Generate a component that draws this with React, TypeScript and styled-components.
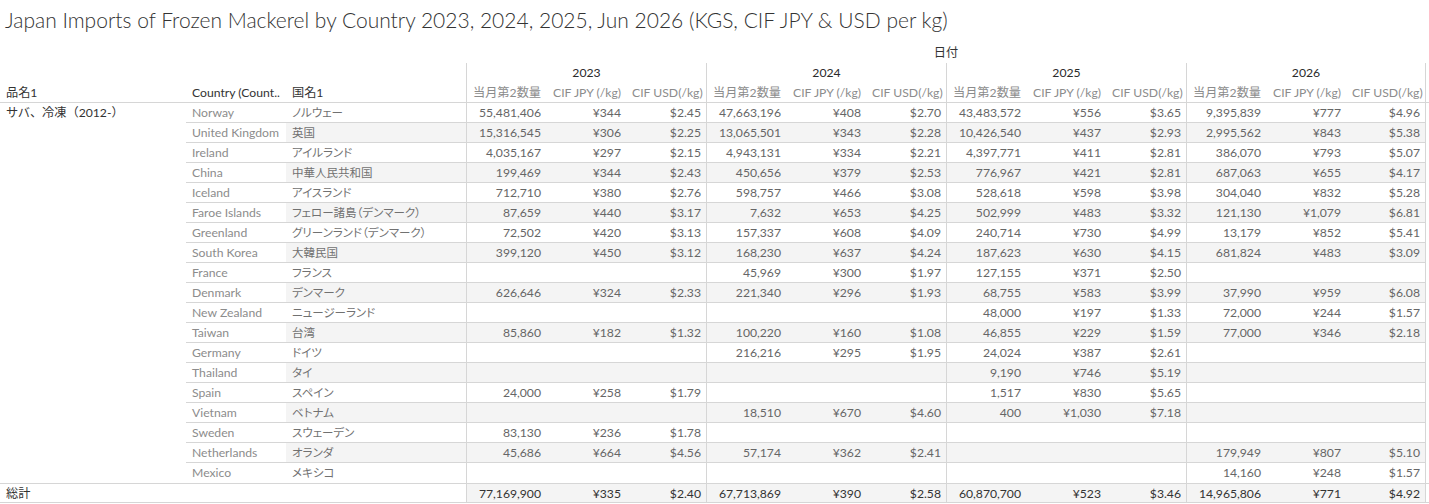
import React, { ReactElement } from 'react';
import styled, { createGlobalStyle } from 'styled-components';

const GlobalStyle = createGlobalStyle`
  body {
    background: #ffffff;
    margin: 0;
  }
`;

const GRID = '186px 100px 180px repeat(12, 80px)';
const LINE = '#d6d6d6';
const BAND = '#f4f4f4';

type Triple = [string, string, string] | null;

interface DataRow {
  country: string;
  jp: string;
  years: Triple[];
}

const years = ['2023', '2024', '2025', '2026'];
const measures = ['当月第2数量', 'CIF JPY (/kg)', 'CIF USD(/kg)'];

const rows: DataRow[] = [
  { country: 'Norway', jp: 'ノルウェー', years: [['55,481,406', '¥344', '$2.45'], ['47,663,196', '¥408', '$2.70'], ['43,483,572', '¥556', '$3.65'], ['9,395,839', '¥777', '$4.96']] },
  { country: 'United Kingdom', jp: '英国', years: [['15,316,545', '¥306', '$2.25'], ['13,065,501', '¥343', '$2.28'], ['10,426,540', '¥437', '$2.93'], ['2,995,562', '¥843', '$5.38']] },
  { country: 'Ireland', jp: 'アイルランド', years: [['4,035,167', '¥297', '$2.15'], ['4,943,131', '¥334', '$2.21'], ['4,397,771', '¥411', '$2.81'], ['386,070', '¥793', '$5.07']] },
  { country: 'China', jp: '中華人民共和国', years: [['199,469', '¥344', '$2.43'], ['450,656', '¥379', '$2.53'], ['776,967', '¥421', '$2.81'], ['687,063', '¥655', '$4.17']] },
  { country: 'Iceland', jp: 'アイスランド', years: [['712,710', '¥380', '$2.76'], ['598,757', '¥466', '$3.08'], ['528,618', '¥598', '$3.98'], ['304,040', '¥832', '$5.28']] },
  { country: 'Faroe Islands', jp: 'フェロー諸島（デンマーク）', years: [['87,659', '¥440', '$3.17'], ['7,632', '¥653', '$4.25'], ['502,999', '¥483', '$3.32'], ['121,130', '¥1,079', '$6.81']] },
  { country: 'Greenland', jp: 'グリーンランド（デンマーク）', years: [['72,502', '¥420', '$3.13'], ['157,337', '¥608', '$4.09'], ['240,714', '¥730', '$4.99'], ['13,179', '¥852', '$5.41']] },
  { country: 'South Korea', jp: '大韓民国', years: [['399,120', '¥450', '$3.12'], ['168,230', '¥637', '$4.24'], ['187,623', '¥630', '$4.15'], ['681,824', '¥483', '$3.09']] },
  { country: 'France', jp: 'フランス', years: [null, ['45,969', '¥300', '$1.97'], ['127,155', '¥371', '$2.50'], null] },
  { country: 'Denmark', jp: 'デンマーク', years: [['626,646', '¥324', '$2.33'], ['221,340', '¥296', '$1.93'], ['68,755', '¥583', '$3.99'], ['37,990', '¥959', '$6.08']] },
  { country: 'New Zealand', jp: 'ニュージーランド', years: [null, null, ['48,000', '¥197', '$1.33'], ['72,000', '¥244', '$1.57']] },
  { country: 'Taiwan', jp: '台湾', years: [['85,860', '¥182', '$1.32'], ['100,220', '¥160', '$1.08'], ['46,855', '¥229', '$1.59'], ['77,000', '¥346', '$2.18']] },
  { country: 'Germany', jp: 'ドイツ', years: [null, ['216,216', '¥295', '$1.95'], ['24,024', '¥387', '$2.61'], null] },
  { country: 'Thailand', jp: 'タイ', years: [null, null, ['9,190', '¥746', '$5.19'], null] },
  { country: 'Spain', jp: 'スペイン', years: [['24,000', '¥258', '$1.79'], null, ['1,517', '¥830', '$5.65'], null] },
  { country: 'Vietnam', jp: 'ベトナム', years: [null, ['18,510', '¥670', '$4.60'], ['400', '¥1,030', '$7.18'], null] },
  { country: 'Sweden', jp: 'スウェーデン', years: [['83,130', '¥236', '$1.78'], null, null, null] },
  { country: 'Netherlands', jp: 'オランダ', years: [['45,686', '¥664', '$4.56'], ['57,174', '¥362', '$2.41'], null, ['179,949', '¥807', '$5.10']] },
  { country: 'Mexico', jp: 'メキシコ', years: [null, null, null, ['14,160', '¥248', '$1.57']] },
];

const totals: Triple[] = [
  ['77,169,900', '¥335', '$2.40'],
  ['67,713,869', '¥390', '$2.58'],
  ['60,870,700', '¥523', '$3.46'],
  ['14,965,806', '¥771', '$4.92'],
];

const Page = styled.div`
  color: #333333;
  font-family: Lato, "Noto Sans CJK JP", sans-serif;
  font-size: 12.2px;
  width: 1429px;
`;

const Title = styled.h1`
  box-sizing: border-box;
  color: #333333;
  font-family: Lato, "Noto Sans CJK JP", sans-serif;
  font-size: 21px;
  font-weight: 300;
  height: 43px;
  line-height: 24px;
  margin: 0;
  padding: 8px 0 0 5px;
  white-space: nowrap;
`;

const Row = styled.div<{ $top?: boolean; $bottom?: boolean }>`
  border-bottom: ${(p) => (p.$bottom ? `1px solid ${LINE}` : 'none')};
  border-top: ${(p) => (p.$top ? `1px solid ${LINE}` : 'none')};
  box-sizing: border-box;
  display: grid;
  grid-template-columns: ${GRID};
  height: 20px;
`;

const DateLabel = styled.div`
  color: #333333;
  grid-column: 4 / span 12;
  line-height: 20px;
  text-align: center;
`;

const YearCell = styled.div<{ $last?: boolean }>`
  border-left: 1px solid ${LINE};
  border-right: ${(p) => (p.$last ? `1px solid ${LINE}` : 'none')};
  box-sizing: border-box;
  color: #2b2b2b;
  font-weight: 400;
  grid-column: span 3;
  line-height: 20px;
  text-align: center;
`;

const Cell = styled.div<{
  $align?: 'left' | 'right';
  $band?: boolean;
  $tone?: 'dark' | 'mid' | 'light' | 'kana';
  $groupStart?: boolean;
  $last?: boolean;
  $ruled?: boolean;
}>`
  background: ${(p) => (p.$band ? BAND : 'transparent')};
  border-bottom: ${(p) => (p.$ruled ? `1px solid ${LINE}` : 'none')};
  border-left: ${(p) => (p.$groupStart ? `1px solid ${LINE}` : 'none')};
  border-right: ${(p) => (p.$last ? `1px solid ${LINE}` : 'none')};
  box-sizing: border-box;
  color: ${(p) =>
    p.$tone === 'dark' ? '#333333' : p.$tone === 'light' ? '#8c8c8c' : p.$tone === 'kana' ? '#717171' : '#666666'};
  font-feature-settings: ${(p) => (p.$tone === 'kana' ? '"palt"' : 'normal')};
  font-size: ${(p) => (p.$tone === 'kana' ? '11.5px' : 'inherit')};
  line-height: 19px;
  overflow: hidden;
  padding: 0 5px 0 6px;
  text-align: ${(p) => p.$align ?? 'left'};
  white-space: nowrap;
`;

const HeaderCell = styled(Cell)`
  line-height: 20px;
`;

const ValueCells = ({ values, band, dark, ruled }: {
  values: Triple[];
  band: boolean;
  dark?: boolean;
  ruled?: boolean;
}): ReactElement => (
  <>
    {values.map((triple, g) =>
      [0, 1, 2].map((i) => (
        <Cell
          key={`${g}-${i}`}
          $align="right"
          $band={band}
          $tone={dark ? 'dark' : 'mid'}
          $groupStart={i === 0}
          $last={g === 3 && i === 2}
          $ruled={ruled}
        >
          {triple ? triple[i] : ''}
        </Cell>
      ))
    )}
  </>
);

const App = (): ReactElement => (
  <Page>
    <GlobalStyle />
    <Title>Japan Imports of Frozen Mackerel by Country 2023, 2024, 2025, Jun 2026 (KGS, CIF JPY &amp; USD per kg)</Title>
    <Row>
      <DateLabel>日付</DateLabel>
    </Row>
    <Row>
      <div />
      <div />
      <div />
      {years.map((y, i) => (
        <YearCell key={y} $last={i === 3}>{y}</YearCell>
      ))}
    </Row>
    <Row $bottom>
      <HeaderCell $tone="dark">品名1</HeaderCell>
      <HeaderCell $tone="dark">Country (Count..</HeaderCell>
      <HeaderCell $tone="dark">国名1</HeaderCell>
      {years.map((y, g) =>
        measures.map((m, i) => (
          <HeaderCell
            key={`${y}-${m}`}
            $align="right"
            $tone="light"
            $groupStart={i === 0}
            $last={g === 3 && i === 2}
          >
            {m}
          </HeaderCell>
        ))
      )}
    </Row>
    {rows.map((r, idx) => {
      const band = idx % 2 === 1;
      const ruled = idx !== rows.length - 1;
      return (
        <Row key={r.country}>
          <Cell $tone="dark">{idx === 0 ? 'サバ、冷凍（2012-）' : ''}</Cell>
          <Cell $tone="light" $ruled={ruled}>{r.country}</Cell>
          <Cell $tone="kana" $band={band} $ruled={ruled}>{r.jp}</Cell>
          <ValueCells values={r.years} band={band} ruled={ruled} />
        </Row>
      );
    })}
    <Row $top $bottom>
      <Cell $tone="dark">総計</Cell>
      <Cell />
      <Cell />
      <ValueCells values={totals} band dark />
    </Row>
  </Page>
);

export default App;
